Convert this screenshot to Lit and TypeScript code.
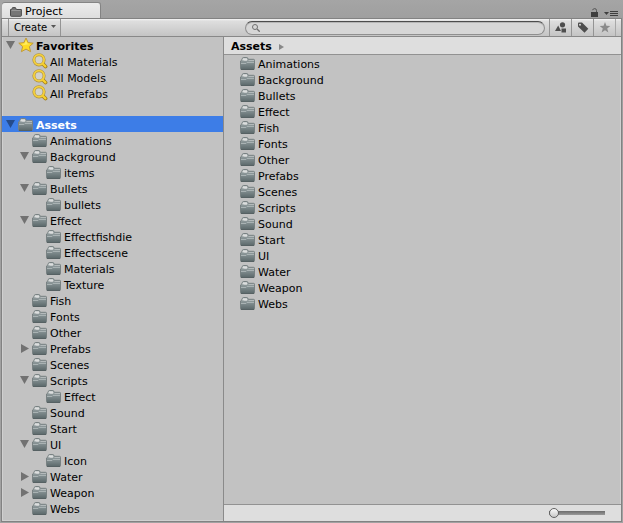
import { LitElement, html, css, svg, nothing } from "lit";
import { customElement, state } from "lit/decorators.js";
import { classMap } from "lit/directives/class-map.js";

interface Folder {
  name: string;
  open?: boolean;
  children?: Folder[];
}

const leaf = (...names: string[]): Folder[] => names.map((name) => ({ name }));

const FAVORITES = ["All Materials", "All Models", "All Prefabs"];

const ASSETS: Folder[] = [
  ...leaf("Animations"),
  { name: "Background", open: true, children: leaf("items") },
  { name: "Bullets", open: true, children: leaf("bullets") },
  { name: "Effect", open: true, children: leaf("Effectfishdie", "Effectscene", "Materials", "Texture") },
  ...leaf("Fish", "Fonts", "Other"),
  { name: "Prefabs", open: false, children: [] },
  ...leaf("Scenes"),
  { name: "Scripts", open: true, children: leaf("Effect") },
  ...leaf("Sound", "Start"),
  { name: "UI", open: true, children: leaf("Icon") },
  { name: "Water", open: false, children: [] },
  { name: "Weapon", open: false, children: [] },
  ...leaf("Webs"),
];

const gradients = svg`
  <defs>
    <linearGradient id="body" x1="0" y1="0" x2="0" y2="1">
      <stop offset="0" stop-color="#a3abac" />
      <stop offset=".5" stop-color="#7f8b8d" />
      <stop offset="1" stop-color="#5b686a" />
    </linearGradient>
  </defs>`;

const folderIcon = html`<svg class="folder" viewBox="0 0 15 13" width="15" height="13" aria-hidden="true">
  ${gradients}
  <path d="M.5 11.500V4L2 2.600l.5-1.500Q2.700.5 3.500.5h3.300q.7 0 .9.600L8.300 2.300h5.200q1 0 1 1v8.200q0 1-1 1h-12q-1 0-1-1z" fill="url(#body)" stroke="#788182" />
  <path d="M2.200 3.200 3 1.200h3.800L7.500 3l-.8.700H4.500L4 3.500z" fill="#dcdede" />
  <path d="M8.500 3.500H14" stroke="#b4babb" />
  <path d="M1 6.500h5l1-1h7" stroke="#a9b2b3" fill="none" />
  <path d="M1 12.500h13" stroke="#566163" />
</svg>`;

const tabFolderIcon = html`<svg viewBox="0 0 12 10" width="12" height="10" aria-hidden="true">
  <path d="M.5 8.500v-6h1L2.600.6h2.800l1 1.900h5v6q0 .8-.8.8H1.300q-.8 0-.8-.8z" fill="#777" stroke="#4b4b4b" />
  <path d="M1.500 3.500H10.500" stroke="#999" />
</svg>`;

const starIcon = html`<svg class="folder" viewBox="0 0 16 16" width="16" height="16" aria-hidden="true">
  <path d="M8 1 10.100 5.600 15.200 6.200 11.400 9.600 12.600 14.700 8 12.100 3.400 14.700 4.600 9.600.8 6.200 5.900 5.600z" fill="#ffdb22" stroke="#c19a3a" stroke-linejoin="round" />
  <path d="M8 3 9.300 6.600 12.500 7 6 8 3.500 7 6.700 6.600z" fill="#ffec62" />
</svg>`;

const lensIcon = html`<svg viewBox="0 0 16 16" width="16" height="16" aria-hidden="true">
  <path d="M10.500 10.500 13.500 13.500" stroke="#9f7d1c" stroke-width="3.800" stroke-linecap="round" />
  <circle cx="7" cy="6.800" r="5.100" fill="#d2d2cc" stroke="#ae9140" stroke-width="3" />
  <circle cx="7" cy="6.800" r="5.100" fill="none" stroke="#f3d03e" stroke-width="1.800" />
  <path d="M11 11 13.400 13.400" stroke="#f7d02c" stroke-width="2.200" stroke-linecap="round" />
</svg>`;

@customElement("app-root")
export class ProjectWindow extends LitElement {
  static styles = css`
    :host {
      display: flex;
      flex-direction: column;
      box-sizing: border-box;
      min-height: 100vh;
      padding: 3px 1px 1px;
      background: linear-gradient(#a5a5a5, #9f9f9f 18px, #a2a2a2);
      font: 11px/16px "DejaVu Sans", Verdana, sans-serif;
      color: #000;
    }
    * {
      box-sizing: border-box;
    }
    button {
      margin: 0;
      padding: 0;
      border: 0;
      background: none;
      font: inherit;
      color: inherit;
    }
    svg {
      display: block;
      flex: none;
    }
    .tabs {
      display: flex;
      justify-content: space-between;
      height: 15px;
      padding-left: 1px;
    }
    .tab {
      display: flex;
      align-items: center;
      gap: 3px;
      width: 99px;
      padding: 2px 0 0 8px;
      background: linear-gradient(#ececec, #dedede);
      border-right: 1px solid #838383;
      border-radius: 3px 3px 0 0;
      box-shadow: 0 -1px #858585;
    }
    .window-tools {
      display: flex;
      align-items: flex-end;
      gap: 6px;
      padding: 0 4px 1px 0;
    }
    .frame {
      flex: 1;
      display: flex;
      flex-direction: column;
      border: 1px solid #828282;
      box-shadow: inset 0 0 0 1px #d0d0d0;
      background: #c2c2c2;
    }
    .toolbar {
      display: flex;
      height: 18px;
      padding-left: 6px;
      background: linear-gradient(#f4f4f4, #dedede 2px, #c4c4c4);
      border-bottom: 1px solid #888;
    }
    .create {
      display: flex;
      align-items: center;
      gap: 4px;
      padding: 1px 4px 0 5px;
      border: 1px solid #949494;
      border-width: 0 1px;
      font-size: 10px;
    }
    .search {
      flex: 1;
      display: flex;
      align-items: center;
      gap: 4px;
      height: 14px;
      max-width: 300px;
      margin: 2px 4px 0 auto;
      padding: 0 6px;
      border: 1px solid #8f8f8f;
      border-top-color: #4c4c4c;
      border-radius: 7px;
      background: #d6d6d6;
      box-shadow: inset 0 1px #b5b5b5;
    }
    .search input {
      flex: 1;
      min-width: 0;
      height: 12px;
      padding: 0;
      border: 0;
      outline: 0;
      background: none;
      font: inherit;
    }
    .filter {
      display: grid;
      place-items: center;
      width: 22px;
      border-left: 1px solid #949494;
    }
    .filter.last {
      width: 23px;
      margin-right: 5px;
      border-right: 1px solid #a8a8a8;
    }
    .panes {
      flex: 1;
      display: grid;
      grid-template-columns: 222px 1fr;
    }
    .tree {
      border-right: 1px solid #8a8a8a;
      padding-bottom: 4px;
    }
    .favorites {
      margin-bottom: 15px;
    }
    .row {
      display: flex;
      align-items: center;
      height: 16px;
      padding-left: 4px;
      white-space: nowrap;
    }
    .row.level1 {
      padding-left: 18px;
    }
    .row.level2 {
      padding-left: 32px;
    }
    .row.root {
      font-weight: bold;
    }
    .row.selected {
      background: #3d7de7;
      color: #fff;
    }
    .toggle {
      display: block;
      width: 9px;
      height: 10px;
      margin-right: 3px;
      color: #727272;
    }
    .selected .toggle {
      color: #254b8b;
    }
    .label {
      padding: 4px 0 0 3px;
      line-height: 14px;
    }
    .label.magnified {
      padding-left: 2px;
    }
    .browser {
      display: flex;
      flex-direction: column;
    }
    .path {
      display: flex;
      align-items: center;
      gap: 7px;
      height: 18px;
      padding: 2px 0 0 7px;
      border-bottom: 1px solid #929292;
      background: #dedede;
      font-weight: bold;
    }
    .items {
      flex: 1;
      margin: 0;
      padding: 0 0 0 12px;
      list-style: none;
    }
    .footer {
      display: flex;
      justify-content: flex-end;
      align-items: center;
      height: 17px;
      padding-right: 16px;
      border-top: 1px solid #929292;
      background: #dedede;
    }
    .zoom {
      appearance: none;
      width: 56px;
      height: 10px;
      margin: 0;
      background: linear-gradient(#6c6c6c, #999) center / 100% 4px no-repeat;
      border-radius: 2px;
    }
    .zoom::-webkit-slider-thumb {
      appearance: none;
      width: 10px;
      height: 10px;
      border: 1px solid #626262;
      border-radius: 50%;
      background: linear-gradient(#fafafa, #c8c8c8);
    }
  `;

  @state() private closed = new Set<string>(ASSETS.filter((f) => f.open === false).map((f) => f.name));

  private flip(name: string) {
    const next = new Set(this.closed);
    if (!next.delete(name)) next.add(name);
    this.closed = next;
  }

  private toggle(name: string) {
    const open = !this.closed.has(name);
    return html`<button class="toggle" aria-label="Toggle ${name}" aria-expanded=${open} @click=${() => this.flip(name)}>
      <svg viewBox="0 0 9 10" width="9" height="10"><path d=${open ? "M0 1h9L4.500 9z" : "M1 1v9l8-4.500z"} fill="currentColor" /></svg>
    </button>`;
  }

  private folder(item: Folder, level: number): unknown {
    return html`<div class=${classMap({ row: true, level1: level === 1, level2: level === 2 })} role="treeitem" aria-level=${level + 1}>
        ${item.children ? this.toggle(item.name) : html`<span class="toggle"></span>`}${folderIcon}<span class="label">${item.name}</span>
      </div>
      ${item.children && !this.closed.has(item.name) ? item.children.map((c) => this.folder(c, level + 1)) : nothing}`;
  }

  render() {
    return html`
      <header class="tabs">
        <button class="tab" role="tab" aria-selected="true">${tabFolderIcon}<span>Project</span></button>
        <div class="window-tools">
          <button aria-label="Lock">
            <svg viewBox="0 0 7 9" width="7" height="9"><path d="M0 4h7v5H0z" fill="#3f3f3f" /><path d="M1.500 2.200Q2 .6 3.700.6 5.500.6 5.500 2.500V4" fill="none" stroke="#555" /></svg>
          </button>
          <button aria-label="Window menu">
            <svg viewBox="0 0 14 8" width="14" height="8"><path d="M0 3h5L2.500 6z" fill="#3f3f3f" /><path d="M6 2.500h8M6 4.500h8M6 6.500h8" stroke="#3f3f3f" /></svg>
          </button>
        </div>
      </header>
      <main class="frame">
        <div class="toolbar">
          <button class="create">Create<svg viewBox="0 0 5 6" width="5" height="6"><path d="M0 0h5L2.500 3z" fill="#555" /></svg></button>
          <label class="search">
            <svg viewBox="0 0 8 8" width="8" height="8"><circle cx="3" cy="3" r="2.500" fill="none" stroke="#707070" /><path d="M5 5 7.700 7.700" stroke="#707070" stroke-width="1.300" /></svg>
            <input type="text" aria-label="Search" />
          </label>
          <button class="filter" aria-label="Search by type">
            <svg viewBox="0 0 12 11" width="12" height="11"><circle cx="7.500" cy="2.800" r="2.600" fill="#4e4e4e" /><path d="M0 9 3.200 3.500 6 9zM6.500 6.500h4.500v4H6.500z" fill="#4e4e4e" /></svg>
          </button>
          <button class="filter" aria-label="Search by label">
            <svg viewBox="0 0 12 11" width="12" height="11"><path fill-rule="evenodd" d="M1 1.500Q1 .500 2 .500L5 .500 11.300 6.800 7.500 10.800 1 4.500zM3 1.800a1 1 0 1 0 .01 2 1 1 0 1 0-.01-2z" fill="#4e4e4e" /></svg>
          </button>
          <button class="filter last" aria-label="Save search">
            <svg viewBox="0 0 12 11" width="12" height="11"><path d="M6 0 7.400 3.800 11.300 3.900 8.200 6.400 9.400 10.500 6 8.200 2.600 10.500 3.800 6.400.7 3.900 4.600 3.800z" fill="#8b8b8b" /></svg>
          </button>
        </div>
        <div class="panes">
          <nav class="tree" role="tree" aria-label="Project folders">
            <div class="favorites">
              <div class="row root" role="treeitem">${this.toggle("Favorites")}${starIcon}<span class="label magnified">Favorites</span></div>
              ${this.closed.has("Favorites")
                ? nothing
                : FAVORITES.map(
                    (name) => html`<div class="row level1" role="treeitem"><span class="toggle"></span>${lensIcon}<span class="label magnified">${name}</span></div>`
                  )}
            </div>
            <div class="row root selected" role="treeitem" aria-selected="true">${this.toggle("Assets")}${folderIcon}<span class="label">Assets</span></div>
            ${this.closed.has("Assets") ? nothing : ASSETS.map((item) => this.folder(item, 1))}
          </nav>
          <section class="browser">
            <div class="path">Assets<svg viewBox="0 0 5 6" width="5" height="6"><path d="M0 0 5 3 0 6z" fill="#888" /></svg></div>
            <ul class="items">
              ${ASSETS.map((item) => html`<li class="row">${folderIcon}<span class="label">${item.name}</span></li>`)}
            </ul>
            <footer class="footer"><input class="zoom" type="range" min="0" max="100" value="0" aria-label="Icon size" /></footer>
          </section>
        </div>
      </main>
    `;
  }
}
